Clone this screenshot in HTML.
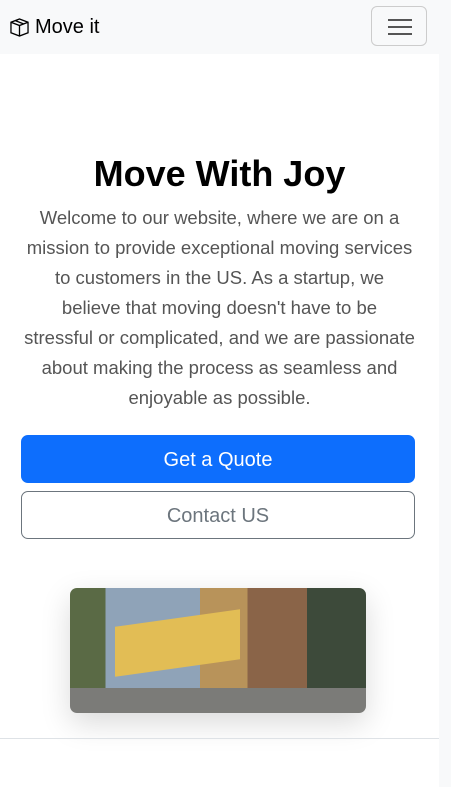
<!DOCTYPE html>
<html><head><style>
body{margin:0;width:451px;height:787px;background:#f8f9fa;font-family:"Liberation Sans",sans-serif;overflow:hidden;position:relative}
.nav{position:absolute;left:0;top:0;width:451px;height:54px;background:#f8f9fa}
.brand{position:absolute;left:9px;top:16px;font-size:20px;color:#000;display:flex;align-items:center;gap:5px}
.tog{position:absolute;left:371px;top:6px;width:56px;height:40px;border:1px solid #ccc;border-radius:6px;box-sizing:border-box}
.tog i{position:absolute;left:16px;width:24px;height:2px;background:#555}
.main{position:absolute;left:0;top:54px;width:439px;height:733px;background:#fff}
h1{position:absolute;top:99px;left:0;width:439px;text-align:center;margin:0;font-size:36px;font-weight:bold;color:#000}
p{position:absolute;top:149px;left:0;width:439px;text-align:center;margin:0;font-size:18.5px;line-height:30px;color:#555;white-space:nowrap}
.b{position:absolute;left:21px;width:394px;height:48px;border-radius:7px;box-sizing:border-box;text-align:center;line-height:48px;font-size:20px}
.b1{top:381px;background:#0d6efd;color:#fff;border:1px solid #0d6efd}
.b2{top:437px;border:1px solid #6c757d;color:#6c757d;background:#fff}
.img{position:absolute;left:70px;top:534px;width:296px;height:125px;border-radius:7px;overflow:hidden;box-shadow:0 10px 30px rgba(0,0,0,.15);
background:linear-gradient(180deg,transparent 0 80%,#7b7b78 80%),linear-gradient(90deg,#5a6a45 0 12%,#8fa3b8 12% 44%,#b8935a 44% 60%,#8a6448 60% 80%,#3d4a3a 80%)}
.band{position:absolute;left:45px;top:30px;width:125px;height:50px;background:#e2bd55;transform:skewY(-8deg)}
.hr{position:absolute;left:0;top:684px;width:439px;height:1px;background:#dee2e6}
</style></head><body>
<div class="nav"><div class="brand"><svg width="21" height="21" viewBox="0 0 16 16" fill="none" stroke="#000" stroke-width="1"><path d="M8 1.5 14.5 4v8L8 14.5 1.5 12V4z M1.5 4 8 6.5 14.5 4 M8 6.5v8 M4.8 2.8l6.5 2.5"/></svg>Move it</div>
<div class="tog"><i style="top:12px"></i><i style="top:19px"></i><i style="top:26px"></i></div></div>
<div class="main">
<h1>Move With Joy</h1>
<p>Welcome to our website, where we are on a<br>mission to provide exceptional moving services<br>to customers in the US. As a startup, we<br>believe that moving doesn't have to be<br>stressful or complicated, and we are passionate<br>about making the process as seamless and<br>enjoyable as possible.</p>
<div class="b b1">Get a Quote</div>
<div class="b b2">Contact US</div>
<div class="img"><div class="band"></div></div>
<div class="hr"></div>
</div>
</body></html>
